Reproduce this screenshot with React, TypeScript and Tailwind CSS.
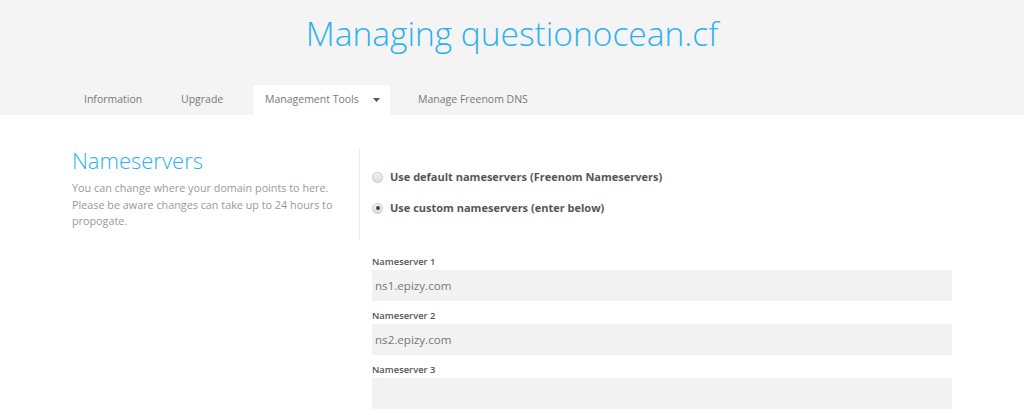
import React from "react";

function Radio({ checked }: { checked: boolean }) {
  return (
    <span className="w-[11px] h-[11px] rounded-full border border-[#c8c8c8] bg-gradient-to-b from-[#f4f4f4] to-[#dcdcdc] flex items-center justify-center shrink-0">
      {checked && <span className="w-[4px] h-[4px] rounded-full bg-[#444]" />}
    </span>
  );
}

function Field({ label, value }: { label: string; value: string }) {
  return (
    <div className="flex flex-col">
      <div className="text-[9.4px] font-semibold text-[#555] leading-[14px] h-[15px]">{label}</div>
      <div className="h-[31px] bg-[#f2f2f2] flex items-center px-[3px] text-[11.6px] text-[#777]">{value}</div>
    </div>
  );
}

export default function App() {
  return (
    <div className="w-[1024px] h-[415px] bg-white overflow-hidden font-['Open_Sans',sans-serif]">
      <div className="bg-[#f4f4f4] h-[115px] flex flex-col">
        <div className="h-[85px] flex items-center justify-center pb-[18px]">
          <h1 className="text-[33.5px] font-light text-[#2bb1ef] leading-none whitespace-nowrap">Managing questionocean.cf</h1>
        </div>
        <div className="flex h-[30px] pl-[72px] text-[10.5px] text-[#777] whitespace-nowrap">
          <div className="px-[12px] flex items-center w-[97px]">Information</div>
          <div className="px-[12px] flex items-center w-[84px]">Upgrade</div>
          <div className="bg-white rounded-t-[3px] w-[137px] flex items-center justify-between pl-[12px] pr-[10px]">
            <span>Management Tools</span>
            <svg width="7" height="4" viewBox="0 0 7 4"><path d="M0 0h7L3.5 4z" fill="#555" /></svg>
          </div>
          <div className="px-[28px] flex items-center">Manage Freenom DNS</div>
        </div>
      </div>
      <div className="flex px-[72px] pt-[33px]">
        <div className="w-[288px] border-r border-[#ececec] h-[92px]">
          <h2 className="text-[22px] font-light text-[#2bb1ef] leading-[24px]">Nameservers</h2>
          <p className="mt-[8px] text-[10.8px] leading-[16.5px] text-[#999] pr-[10px]">
            You can change where your domain points to here. Please be aware changes can take up to 24 hours to propogate.
          </p>
        </div>
        <div className="flex-1 pl-[12px] pt-[20px]">
          <div className="flex items-center gap-[7px] h-[18px] text-[11px] font-bold text-[#555] whitespace-nowrap">
            <Radio checked={false} />
            <span>Use default nameservers (Freenom Nameservers)</span>
          </div>
          <div className="flex items-center gap-[7px] h-[18px] mt-[13px] text-[11px] font-bold text-[#555] whitespace-nowrap">
            <Radio checked={true} />
            <span>Use custom nameservers (enter below)</span>
          </div>
          <div className="mt-[38px] flex flex-col gap-[8px]">
            <Field label="Nameserver 1" value="ns1.epizy.com" />
            <Field label="Nameserver 2" value="ns2.epizy.com" />
            <Field label="Nameserver 3" value="" />
          </div>
        </div>
      </div>
    </div>
  );
}
